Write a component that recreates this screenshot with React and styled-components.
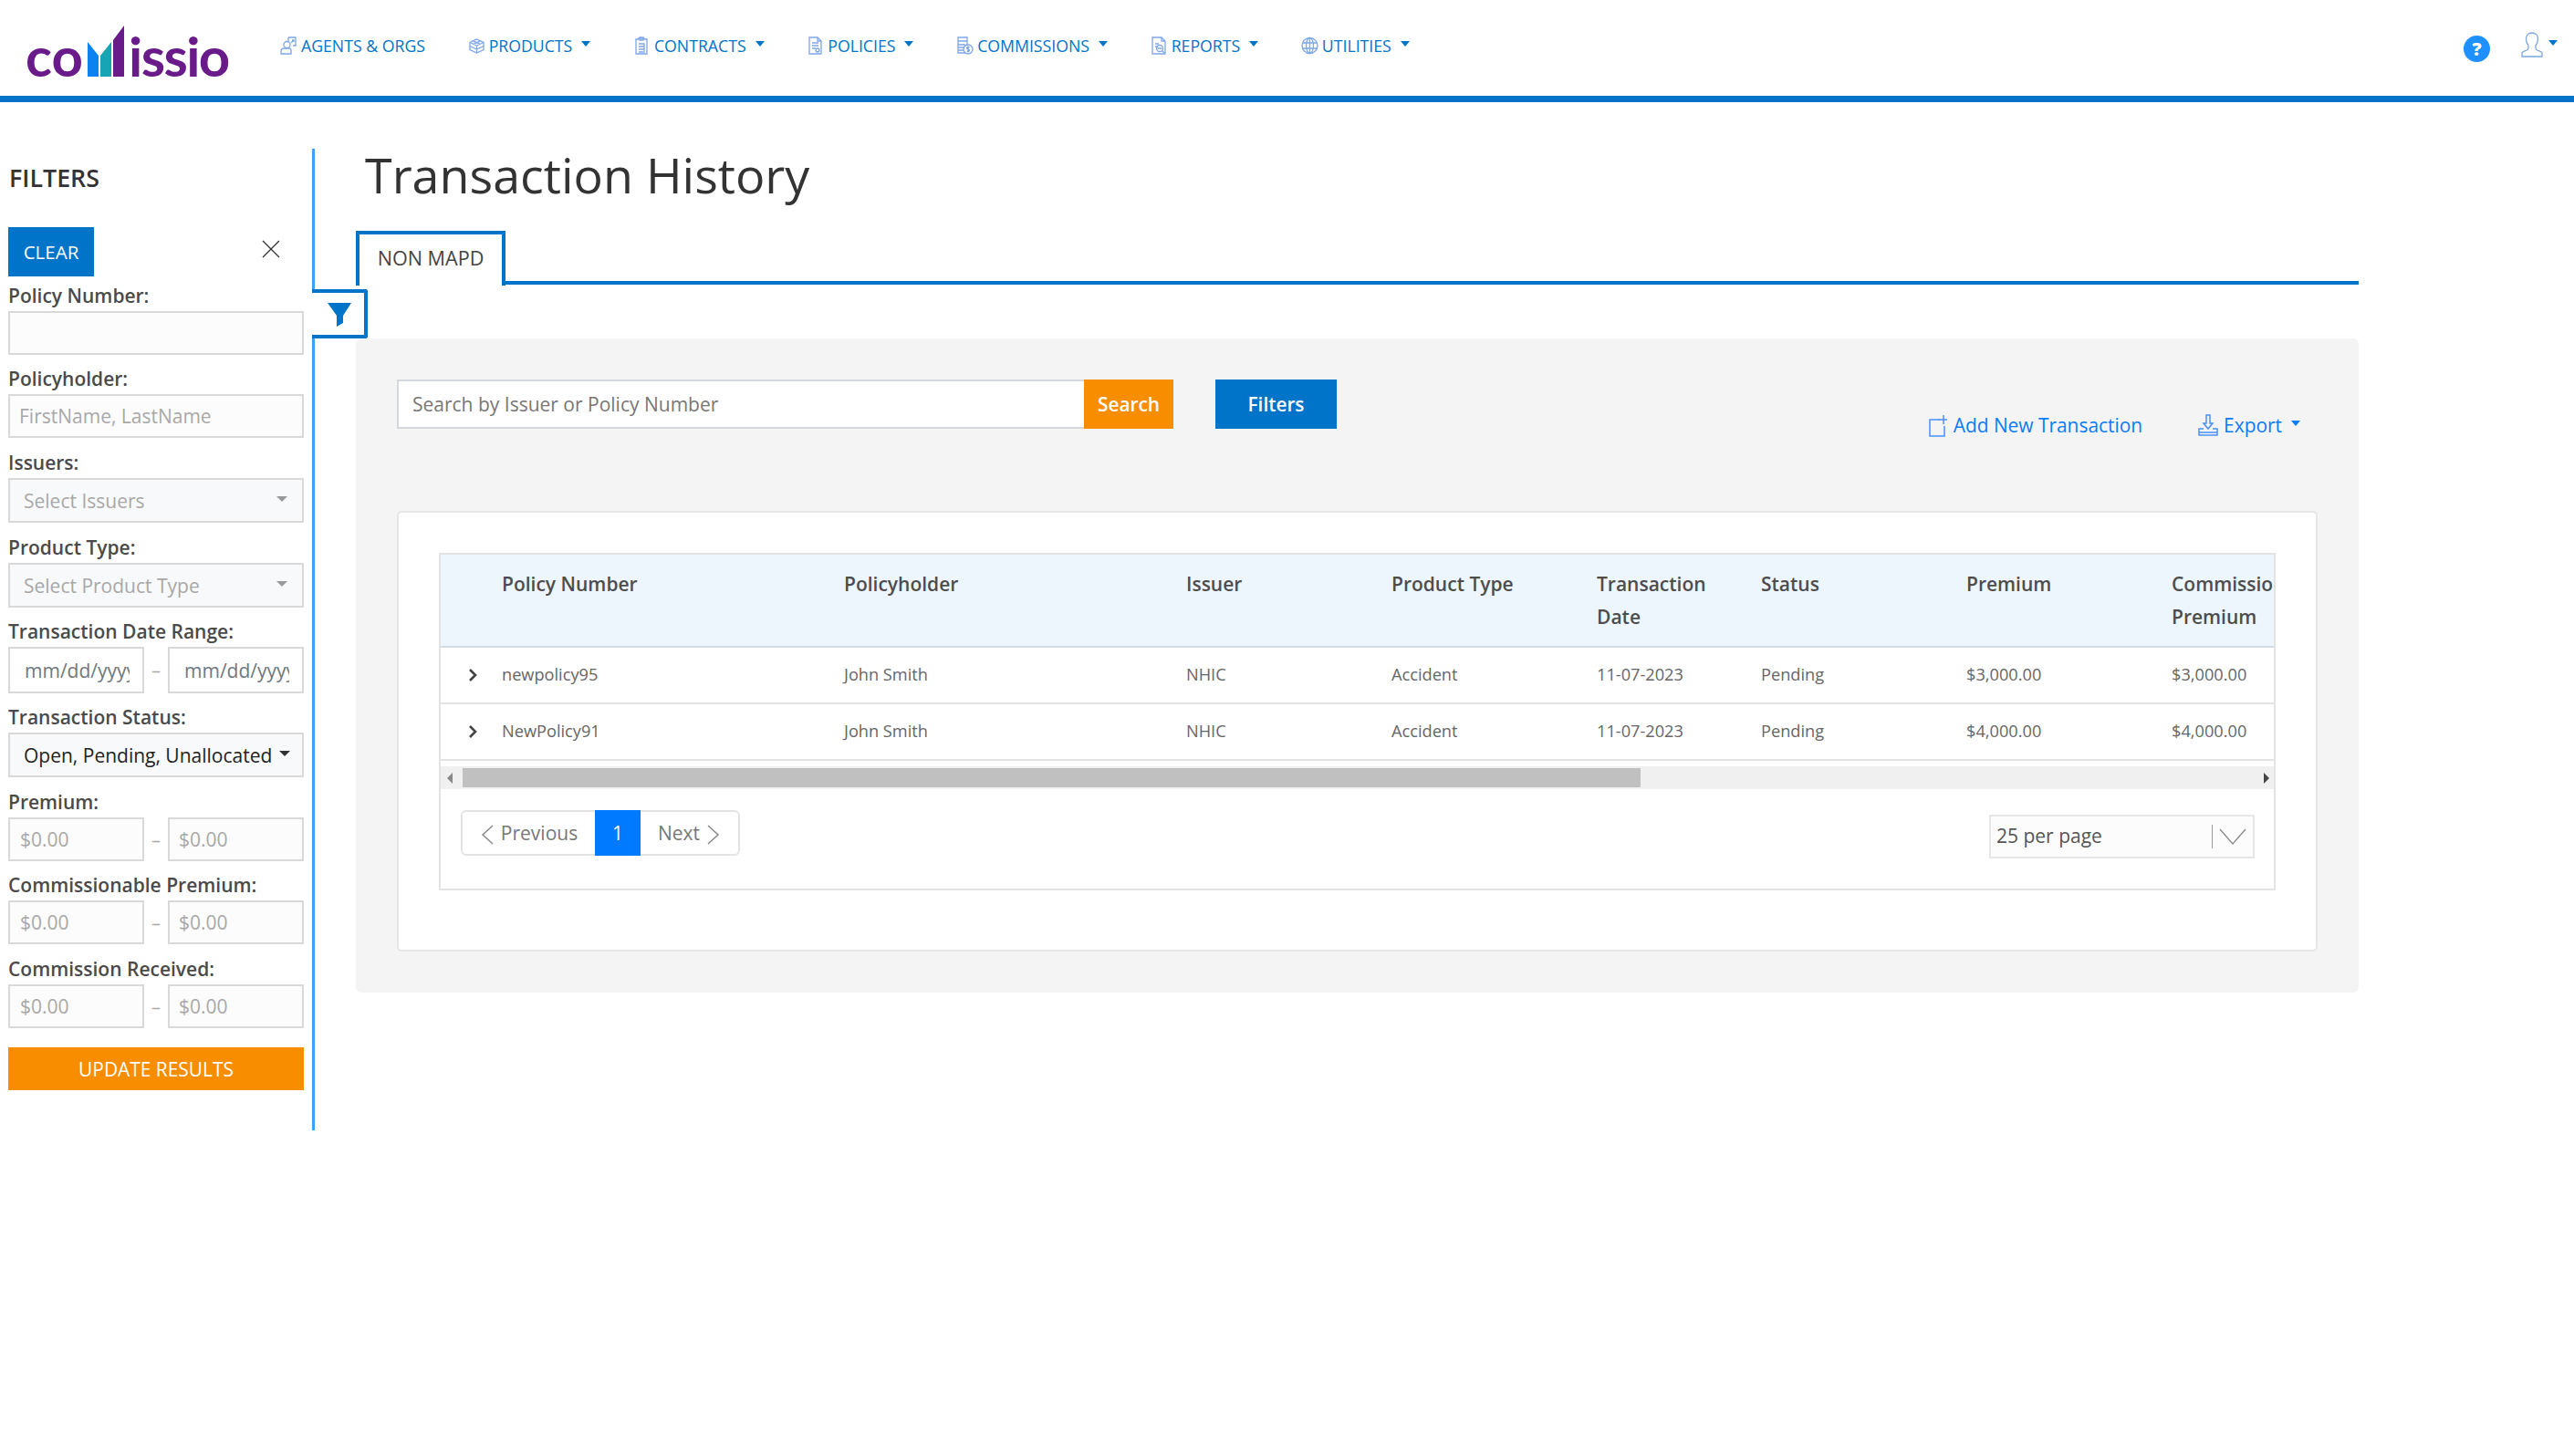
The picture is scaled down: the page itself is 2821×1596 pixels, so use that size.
import React from "react";
import styled, { createGlobalStyle } from "styled-components";

const Global = createGlobalStyle`
  html, body { margin: 0; padding: 0; background: #fff; }
  body { font-family: "Open Sans", "DejaVu Sans", sans-serif; color: #444; }
  * { box-sizing: border-box; }
`;

const BLUE = "#0074c8";
const ORANGE = "#f98d00";

const Page = styled.div`
  width: 2821px;
  height: 1596px;
  overflow: hidden;
`;
const TopBar = styled.header`
  height: 112px;
  border-bottom: 7px solid ${BLUE};
  display: flex;
  align-items: center;
  padding: 0 18px 0 28px;
`;
const Logo = styled.div`
  width: 222px;
  height: 56px;
  margin-right: 57px;
  margin-top: 6px;
  display: flex;
  align-items: flex-end;
  font-family: "Lato", sans-serif;
  font-weight: 700;
  font-size: 60px;
  color: #6a1b8a;
`;
const LogoLeft = styled.span`
  width: 68px;
  display: block;
  line-height: 46px;
  flex: none;
`;
const LogoBars = styled.svg`
  width: 41px;
  height: 56px;
  flex: none;
`;
const LogoRight = styled.span`
  display: block;
  margin-left: 4px;
  letter-spacing: -1.6px;
  line-height: 46px;
`;
const Menu = styled.nav`
  display: flex;
  gap: 46.7px;
  align-items: center;
  flex: 1;
  margin-top: -5px;
`;
const MenuItem = styled.div`
  display: flex;
  align-items: center;
  color: ${BLUE};
  font-size: 17.7px;
  line-height: 20px;
  white-space: nowrap;
`;
const MenuIcon = styled.svg`
  width: 19px;
  height: 20px;
  margin-right: 4px;
  fill: none;
  stroke: #7ea6e8;
  stroke-width: 1.3;
  flex: none;
`;
const Caret = styled.span`
  display: inline-block;
  width: 0;
  height: 0;
  margin-left: ${(p) => p.$gap ?? 10}px;
  border-top: 6px solid ${(p) => p.$color || BLUE};
  border-left: 5.5px solid transparent;
  border-right: 5.5px solid transparent;
  margin-top: -4px;
`;
const TopRight = styled.div`
  display: flex;
  align-items: center;
  margin-top: -7px;
`;
const HelpBadge = styled.span`
  width: 29px;
  height: 29px;
  border-radius: 50%;
  background: #1e90ff;
  color: #fff;
  font-weight: 800;
  font-size: 20px;
  line-height: 29px;
  text-align: center;
  margin-right: 34px;
  margin-top: 8px;
`;
const UserIcon = styled.svg`
  width: 24px;
  height: 28px;
  fill: none;
  stroke: #7ea6de;
  stroke-width: 1.3;
`;

const Body = styled.div`
  display: flex;
  align-items: flex-start;
`;
const Sidebar = styled.aside`
  position: relative;
  width: 345px;
  height: 1076px;
  margin-top: 51px;
  padding: 17px 9px 0 9px;
  border-right: 3px solid #3f9fff;
  flex: none;
`;
const FilterTitle = styled.h2`
  margin: 0 0 39px 0;
  padding-left: 1px;
  font-size: 26.8px;
  font-weight: 600;
  line-height: 30px;
  color: #333;
`;
const ClearRow = styled.div`
  display: flex;
  justify-content: space-between;
  align-items: flex-start;
  padding-right: 26px;
  margin-bottom: 5px;
`;
const ClearButton = styled.button`
  width: 94px;
  height: 54px;
  border: 0;
  background: ${BLUE};
  color: #fff;
  font: 500 20.5px "Open Sans", sans-serif;
  padding: 0;
`;
const CloseIcon = styled.svg`
  width: 20px;
  height: 20px;
  margin-top: 14px;
  stroke: #333;
  stroke-width: 1.3;
`;
const FieldStack = styled.div`
  display: flex;
  flex-direction: column;
`;
const Field = styled.div`
  height: ${(p) => p.$h}px;
  display: flex;
  flex-direction: column;
`;
const Label = styled.label`
  display: block;
  height: 33px;
  line-height: 32px;
  font-size: 21px;
  font-weight: 600;
  color: #4a4a4a;
  white-space: nowrap;
`;
const TextBox = styled.div`
  height: ${(p) => p.$h || 48}px;
  width: 100%;
  background: ${(p) => p.$bg || "#fcfcfc"};
  border: 2px solid #d9d9d9;
  padding: 0 ${(p) => p.$pr || 9}px 0 ${(p) => p.$pl || 9}px;
  font-size: 21px;
  color: ${(p) => p.$color || "#a8a8a8"};
  display: flex;
  align-items: center;
  justify-content: space-between;
  white-space: nowrap;
  overflow: hidden;
`;
const SelectCaret = styled.span`
  border-top: 6px solid ${(p) => (p.$dark ? "#333" : "#999")};
  border-left: 6px solid transparent;
  border-right: 6px solid transparent;
  flex: none;
  margin-left: 8px;
  margin-top: -3px;
`;
const Range = styled.div`
  display: grid;
  grid-template-columns: 149px 26px 149px;
`;
const Dash = styled.span`
  text-align: center;
  color: #aaa;
  font-size: 20px;
  align-self: center;
`;
const Clipped = styled.span`
  display: block;
  width: 100%;
  overflow: hidden;
`;
const UpdateButton = styled.button`
  width: 100%;
  height: 47px;
  border: 0;
  background: ${ORANGE};
  color: #fff;
  font: 500 20.9px "Open Sans", sans-serif;
`;
const FilterToggle = styled.div`
  position: absolute;
  left: 342px;
  top: 154px;
  width: 61px;
  height: 54px;
  background: #fff;
  border: 4px solid ${BLUE};
  border-left: 0;
  border-radius: 0 3px 3px 0;
  display: flex;
  align-items: center;
  justify-content: center;
  z-index: 2;
`;
const Funnel = styled.svg`
  width: 26px;
  height: 26px;
  fill: ${BLUE};
  margin: 2px 0 0 2px;
`;

const Main = styled.main`
  width: 2195px;
  margin-left: 45px;
  flex: none;
`;
const Title = styled.h1`
  margin: 0 0 0 10px;
  height: 141px;
  padding-top: 43px;
  font-size: 53.8px;
  line-height: 72px;
  font-weight: 400;
  color: #333;
  white-space: nowrap;
`;
const Tabs = styled.div`
  height: 59px;
  border-bottom: 4px solid ${BLUE};
  display: flex;
  align-items: flex-start;
`;
const Tab = styled.div`
  width: 164px;
  height: 60px;
  background: #fff;
  border: 4px solid ${BLUE};
  border-bottom: 0;
  font-size: 21.6px;
  font-weight: 500;
  line-height: 52px;
  text-align: center;
  color: #444;
`;
const Panel = styled.section`
  margin-top: 59px;
  height: 717px;
  background: #f4f4f4;
  border-radius: 6px;
  padding: 45px 45px 0;
`;
const ToolRow = styled.div`
  display: flex;
  align-items: flex-start;
  height: 144px;
`;
const SearchBox = styled.div`
  width: 753px;
  height: 54px;
  background: #fff;
  border: 2px solid #d4d7dc;
  border-right: 0;
  padding-left: 15px;
  font-size: 21px;
  line-height: 50px;
  color: #777;
`;
const ActionButton = styled.button`
  height: 54px;
  width: ${(p) => p.$w}px;
  margin-left: ${(p) => p.$ml || 0}px;
  border: 0;
  background: ${(p) => p.$bg};
  color: #fff;
  font: 600 20.8px "Open Sans", sans-serif;
  padding: 0;
`;
const ToolLinks = styled.div`
  display: flex;
  align-items: center;
  margin-left: auto;
  margin-top: 34px;
  padding-right: 19px;
  color: #0a7cf5;
  font-size: 20.9px;
  line-height: 32px;
`;
const ToolLink = styled.span`
  display: flex;
  align-items: center;
  margin-left: ${(p) => p.$ml || 0}px;
`;
const ToolIcon = styled.svg`
  width: 22px;
  height: 26px;
  margin-right: 6px;
  fill: none;
  stroke: #4a8ffa;
  stroke-width: 1.5;
`;
const Card = styled.div`
  height: 483px;
  background: #fff;
  border: 2px solid #e6e6e6;
  border-radius: 5px;
  padding: 44px 44px 0;
`;
const TableBox = styled.div`
  height: 370px;
  border: 2px solid #e3e3e3;
`;
const Scroller = styled.div`
  overflow: hidden;
`;
const Row = styled.div`
  display: grid;
  grid-template-columns: 67px 375px 375px 225px 225px 180px 225px 225px 225px;
  width: 2122px;
  height: ${(p) => p.$h}px;
  background: ${(p) => (p.$head ? "#edf5fd" : "#fff")};
  border-bottom: 2px solid ${(p) => (p.$head ? "#d0dbe4" : "#e3e3e3")};
`;
const HeadCell = styled.div`
  font-size: 21px;
  font-weight: 600;
  line-height: 36px;
  padding-top: 14px;
  color: #4d4d4d;
  width: ${(p) => (p.$wrap ? "min-content" : "auto")};
  white-space: ${(p) => (p.$wrap ? "normal" : "nowrap")};
`;
const BodyCell = styled.div`
  font-size: 18.2px;
  line-height: 59px;
  color: #666;
  white-space: nowrap;
`;
const ExpandCell = styled.div`
  display: flex;
  align-items: center;
  padding: 0 0 1px 29px;
`;
const ExpandIcon = styled.svg`
  width: 12px;
  height: 16px;
  fill: none;
  stroke: #444;
  stroke-width: 2.6;
`;
const ScrollTrack = styled.div`
  margin-top: 6px;
  height: 25px;
  background: #f0f0f0;
  display: flex;
  align-items: center;
  padding: 0 5px 0 7px;
`;
const ScrollThumb = styled.div`
  height: 21px;
  width: 1291px;
  margin-left: 11px;
  background: #c0c0c0;
`;
const ArrowLeft = styled.span`
  border-top: 6px solid transparent;
  border-bottom: 6px solid transparent;
  border-right: 6px solid #888;
`;
const ArrowRight = styled.span`
  border-top: 6px solid transparent;
  border-bottom: 6px solid transparent;
  border-left: 6px solid #444;
  margin-left: auto;
`;
const FooterRow = styled.div`
  display: flex;
  justify-content: space-between;
  align-items: flex-start;
  padding: 23px 20px 0 22px;
`;
const Pager = styled.div`
  display: flex;
  height: 50px;
  width: 306px;
  border: 2px solid #e3e3e3;
  border-radius: 6px;
  font-size: 21px;
  color: #777;
`;
const PagerPart = styled.div`
  display: flex;
  align-items: center;
  justify-content: center;
  gap: 7px;
  width: ${(p) => p.$w}px;
  flex: none;
  margin: ${(p) => (p.$active ? "-2px 0" : "0")};
  background: ${(p) => (p.$active ? "#007bff" : "transparent")};
  color: ${(p) => (p.$active ? "#fff" : "#777")};
`;
const PagerArrow = styled.svg`
  width: 16px;
  height: 24px;
  fill: none;
  stroke: #888;
  stroke-width: 1.5;
  margin-top: 3px;
`;
const PerPage = styled.div`
  width: 291px;
  height: 48px;
  margin: 5px 1px 0 0;
  background: #fcfcfc;
  border: 2px solid #e6e6e6;
  display: flex;
  align-items: center;
  padding-left: 6px;
  font-size: 21px;
  color: #555;
`;
const PerPageLabel = styled.span`
  display: block;
  margin-top: -3px;
`;
const PerPageDivider = styled.span`
  width: 1px;
  height: 26px;
  background: #999;
  margin-left: auto;
`;
const PerPageChevron = styled.svg`
  width: 30px;
  height: 20px;
  margin: 0 7px 0 7px;
  fill: none;
  stroke: #888;
  stroke-width: 1.2;
`;

const icons = {
  agents: (
    <>
      <path d="M9 1h8v9h-3M9 1v5" />
      <path d="M12 7l3-3M13 4h2v2" />
      <circle cx="7.5" cy="9" r="3.5" />
      <path d="M1 19v-3c0-2 2-3 4-3h5c1 0 2 1 2 3v3z" />
    </>
  ),
  products: (
    <>
      <path d="M9.5 3l7.5 3.5v8L9.5 18 2 14.5v-8z" />
      <path d="M2 6.5L9.5 10 17 6.5M9.5 10v8M5.5 4.800l7.5 3.500M13.5 4.800L6 8.300M2 10.500L9.500 14 17 10.500" />
    </>
  ),
  contracts: (
    <>
      <path d="M3 3h3v-1h6v1h3v16H3z" />
      <path d="M7 1h4v3H7zM6 8h6v10M6 11h6M6 14h6M6 17h5" />
    </>
  ),
  policies: (
    <>
      <path d="M3 1h9l4 4v14H3z" />
      <path d="M12 1v4h4M6 7h7M6 10h7M6 13h4" />
      <circle cx="12" cy="15" r="2" />
    </>
  ),
  commissions: (
    <>
      <path d="M2 1h10v17H2z" />
      <path d="M2 5h10M2 9h8M2 12h6M2 15h6" />
      <circle cx="13" cy="14" r="5" fill="#fff" />
      <path d="M14.5 12c-1-1-3-.6-3 .8s3 .9 3 2.3-2 1.8-3 .8M13 10.5v7" />
    </>
  ),
  reports: (
    <>
      <path d="M2 1h10l4 4v14H2z" />
      <path d="M12 1v4h4M5 8h4M5 11h3" />
      <circle cx="10" cy="13" r="3.5" />
      <path d="M7.5 13h5M12.5 15.5l3 3" />
    </>
  ),
  utilities: (
    <>
      <circle cx="9.5" cy="10" r="8.5" />
      <ellipse cx="9.5" cy="10" rx="4" ry="8.5" />
      <path d="M9.5 1.5v17M1.5 7h16M1.5 13h16" />
    </>
  ),
};

const menu = [
  ["agents", "AGENTS & ORGS", false],
  ["products", "PRODUCTS", true],
  ["contracts", "CONTRACTS", true],
  ["policies", "POLICIES", true],
  ["commissions", "COMMISSIONS", true],
  ["reports", "REPORTS", true],
  ["utilities", "UTILITIES", true],
];

const columns = [
  ["Policy Number", false],
  ["Policyholder", false],
  ["Issuer", false],
  ["Product Type", false],
  ["Transaction Date", true],
  ["Status", false],
  ["Premium", false],
  ["Commissionable Premium", true],
];

const rows = [
  ["newpolicy95", "John Smith", "NHIC", "Accident", "11-07-2023", "Pending", "$3,000.00", "$3,000.00"],
  ["NewPolicy91", "John Smith", "NHIC", "Accident", "11-07-2023", "Pending", "$4,000.00", "$4,000.00"],
];

function MoneyRange() {
  return (
    <Range>
      <TextBox $pl={11}>$0.00</TextBox>
      <Dash>–</Dash>
      <TextBox $pl={10}>$0.00</TextBox>
    </Range>
  );
}

function DateBox() {
  return (
    <TextBox $bg="#fff" $color="#6f7880" $h={51} $pl={16} $pr={14}>
      <Clipped>mm/dd/yyyy</Clipped>
    </TextBox>
  );
}

export default function App() {
  return (
    <Page>
      <Global />
      <TopBar>
        <Logo>
          <LogoLeft>co</LogoLeft>
          <LogoBars viewBox="0 0 41 56">
            <path d="M0 18l12 15v23H0z" fill="#0a82f0" />
            <path d="M14 33l12-15v38H14z" fill="#17a5b4" />
            <path d="M28 16L40 0v56H28z" fill="#6a1b8a" />
          </LogoBars>
          <LogoRight>issio</LogoRight>
        </Logo>
        <Menu>
          {menu.map(([key, text, caret]) => (
            <MenuItem key={key}>
              <MenuIcon viewBox="0 0 19 20">{icons[key]}</MenuIcon>
              {text}
              {caret && <Caret />}
            </MenuItem>
          ))}
        </Menu>
        <TopRight>
          <HelpBadge>?</HelpBadge>
          <UserIcon viewBox="0 0 24 28">
            <path d="M12 1c-4 0-6.500 3-6.500 7 0 3 1 5 2.500 7v3c0 1.500-1 2-2.500 2.500-2 .6-4.500 1-4.500 3V27h22v-3.500c0-2-2.500-2.400-4.500-3C17 20 16 19.500 16 18v-3c1.500-2 2.500-4 2.500-7 0-4-2.500-7-6.500-7z" />
          </UserIcon>
          <Caret $gap={6} />
        </TopRight>
      </TopBar>
      <Body>
        <Sidebar>
          <FilterTitle>FILTERS</FilterTitle>
          <ClearRow>
            <ClearButton>CLEAR</ClearButton>
            <CloseIcon viewBox="0 0 20 20">
              <path d="M1 1l18 18M19 1L1 19" />
            </CloseIcon>
          </ClearRow>
          <FieldStack>
            <Field $h={91}>
              <Label>Policy Number:</Label>
              <TextBox />
            </Field>
            <Field $h={92}>
              <Label>Policyholder:</Label>
              <TextBox $pl={10}>FirstName, LastName</TextBox>
            </Field>
            <Field $h={93}>
              <Label>Issuers:</Label>
              <TextBox $bg="#f8f9fa" $pl={15} $pr={16} $h={49}>
                Select Issuers
                <SelectCaret />
              </TextBox>
            </Field>
            <Field $h={92}>
              <Label>Product Type:</Label>
              <TextBox $bg="#f8f9fa" $pl={15} $pr={16} $h={49}>
                Select Product Type
                <SelectCaret />
              </TextBox>
            </Field>
            <Field $h={94}>
              <Label>Transaction Date Range:</Label>
              <Range>
                <DateBox />
                <Dash>–</Dash>
                <DateBox />
              </Range>
            </Field>
            <Field $h={93}>
              <Label>Transaction Status:</Label>
              <TextBox $bg="#f8f9fa" $color="#222" $pl={15} $pr={16} $h={49}>
                Open, Pending, Unallocated
                <SelectCaret $dark />
              </TextBox>
            </Field>
            <Field $h={91}>
              <Label>Premium:</Label>
              <MoneyRange />
            </Field>
            <Field $h={92}>
              <Label>Commissionable Premium:</Label>
              <MoneyRange />
            </Field>
            <Field $h={102}>
              <Label>Commission Received:</Label>
              <MoneyRange />
            </Field>
            <UpdateButton>UPDATE RESULTS</UpdateButton>
          </FieldStack>
          <FilterToggle>
            <Funnel viewBox="0 0 26 26">
              <path d="M0 0h26L17 14v8l-7 4V14z" />
            </Funnel>
          </FilterToggle>
        </Sidebar>
        <Main>
          <Title>Transaction History</Title>
          <Tabs>
            <Tab>NON MAPD</Tab>
          </Tabs>
          <Panel>
            <ToolRow>
              <SearchBox>Search by Issuer or Policy Number</SearchBox>
              <ActionButton $w={98} $bg={ORANGE}>Search</ActionButton>
              <ActionButton $w={133} $ml={46} $bg={BLUE}>Filters</ActionButton>
              <ToolLinks>
                <ToolLink>
                  <ToolIcon viewBox="0 0 22 26">
                    <path d="M13 7H2v18h16V14" />
                    <path d="M17 2v10M12 7h9" />
                  </ToolIcon>
                  Add New Transaction
                </ToolLink>
                <ToolLink $ml={61}>
                  <ToolIcon viewBox="0 0 22 26">
                    <path d="M9 2h4v9h3l-5 6-5-6h3zM6 17H1v7h20v-7h-5M1 21h20" />
                  </ToolIcon>
                  Export
                  <Caret $color="#0a7cf5" $gap={10} />
                </ToolLink>
              </ToolLinks>
            </ToolRow>
            <Card>
              <TableBox>
                <Scroller>
                  <Row $head $h={102}>
                    <div />
                    {columns.map(([c, wrap]) => (
                      <HeadCell key={c} $wrap={wrap}>{c}</HeadCell>
                    ))}
                  </Row>
                  {rows.map((r) => (
                    <Row key={r[0]} $h={62}>
                      <ExpandCell>
                        <ExpandIcon viewBox="0 0 12 16">
                          <path d="M3 2l6 6-6 6" />
                        </ExpandIcon>
                      </ExpandCell>
                      {r.map((v, i) => (
                        <BodyCell key={i}>{v}</BodyCell>
                      ))}
                    </Row>
                  ))}
                </Scroller>
                <ScrollTrack>
                  <ArrowLeft />
                  <ScrollThumb />
                  <ArrowRight />
                </ScrollTrack>
                <FooterRow>
                  <Pager>
                    <PagerPart $w={145}>
                      <PagerArrow viewBox="0 0 16 24">
                        <path d="M14 2L3 12l11 10" />
                      </PagerArrow>
                      Previous
                    </PagerPart>
                    <PagerPart $w={50} $active>1</PagerPart>
                    <PagerPart $w={107}>
                      Next
                      <PagerArrow viewBox="0 0 16 24">
                        <path d="M2 2l11 10L2 22" />
                      </PagerArrow>
                    </PagerPart>
                  </Pager>
                  <PerPage>
                    <PerPageLabel>25 per page</PerPageLabel>
                    <PerPageDivider />
                    <PerPageChevron viewBox="0 0 30 20">
                      <path d="M1 2l14 16L29 2" />
                    </PerPageChevron>
                  </PerPage>
                </FooterRow>
              </TableBox>
            </Card>
          </Panel>
        </Main>
      </Body>
    </Page>
  );
}
